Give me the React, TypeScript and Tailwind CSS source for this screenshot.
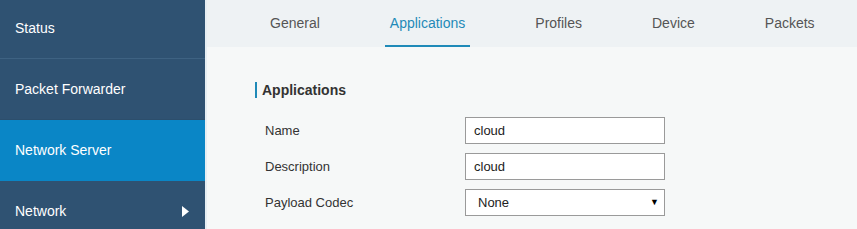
import { useState } from 'react';

const navItems = ['Status', 'Packet Forwarder', 'Network Server', 'Network'];
const tabs = ['General', 'Applications', 'Profiles', 'Device', 'Packets'];

function Sidebar() {
  return (
    <div className="w-[205px] shrink-0 bg-[#2f5272] text-white text-[14px]">
      {navItems.map((item) => {
        const active = item === 'Network Server';
        return (
          <div
            key={item}
            className={
              active
                ? 'h-[61px] flex items-center px-[15px] bg-[#0a86c6]'
                : item === 'Status'
                  ? 'h-[59px] flex items-center px-[15px] border-b border-[#3e6282] pb-[2px]'
                  : 'h-[61px] flex items-center justify-between px-[15px] border-b border-[#2c4e6c]'
            }
          >
            <span>{item}</span>
            {item === 'Network' && (
              <svg width="7" height="11" viewBox="0 0 7 11" className="mr-[1px]">
                <path d="M0 0 L7 5.5 L0 11 Z" fill="#fff" />
              </svg>
            )}
          </div>
        );
      })}
    </div>
  );
}

function Field({ label, value, select }: { label: string; value: string; select?: boolean }) {
  return (
    <div className="flex items-center h-[27px]">
      <div className="w-[210px] pl-[10px] text-[13px] text-[#333]">{label}</div>
      <div className="w-[200px] h-[27px] bg-white border border-[#9a9a9a] flex items-center justify-between text-[13px] text-[#222]">
        <span className={select ? 'pl-[12px]' : 'pl-[8px]'}>{value}</span>
        {select && <span className="pr-[5px] text-[9px] text-black">▼</span>}
      </div>
    </div>
  );
}

export default function App() {
  const [active] = useState('Applications');

  return (
    <div className="flex h-[229px] w-[857px] overflow-hidden font-['Liberation_Sans',Arial,sans-serif]">
      <Sidebar />
      <div className="flex-1 bg-[#f6f8f8] border-l-2 border-[#e6eef3]">
        <div className="h-[47px] bg-[#eef2f4] flex items-end pl-[58px] gap-[60px] text-[14px]">
          {tabs.map((t) => (
            <div
              key={t}
              className={
                t === active
                  ? 'h-[47px] flex items-center px-[5px] pt-[1px] text-[#1f8ab8] border-b-2 border-[#1f8ab8]'
                  : 'h-[47px] flex items-center px-[5px] pt-[1px] text-[#555] border-b-2 border-transparent'
              }
            >
              {t}
            </div>
          ))}
        </div>
        <div className="pl-[48px] pt-[35px]">
          <div className="flex items-center h-[16px] border-l-2 border-[#1f8ab8] pl-[5px] text-[14px] font-bold text-[#333]">
            Applications
          </div>
          <div className="mt-[19px] flex flex-col gap-[9px]">
            <Field label="Name" value="cloud" />
            <Field label="Description" value="cloud" />
            <Field label="Payload Codec" value="None" select />
          </div>
        </div>
      </div>
    </div>
  );
}
